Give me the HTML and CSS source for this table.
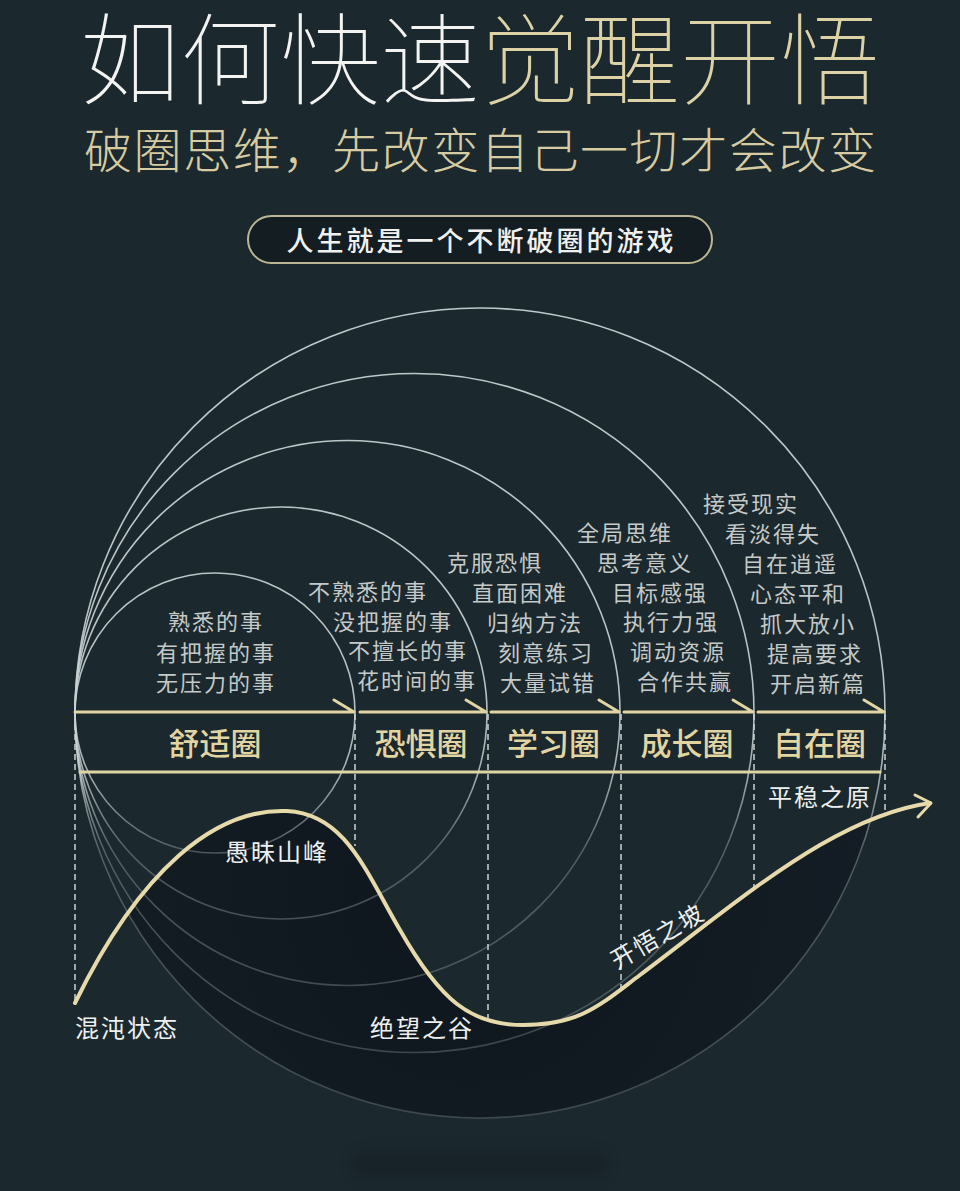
FILE: index.html
```html
<!DOCTYPE html>
<html lang="zh-CN">
<head>
<meta charset="utf-8">
<title>如何快速觉醒开悟</title>
<link rel="stylesheet" href="styles.css">
</head>
<body>
<main class="poster">
  <header class="head">
    <h1 class="title"><span class="t-white">如何快速</span><span class="t-gold">觉醒开悟</span></h1>
    <p class="sub">破圈思维，先改变自己一切才会改变</p>
    <div class="pill">人生就是一个不断破圈的游戏</div>
  </header>

  <section class="diagram">
    <svg class="art" width="960" height="911" viewBox="0 280 960 911" xmlns="http://www.w3.org/2000/svg">
      <defs>
        <linearGradient id="arcfade" gradientUnits="userSpaceOnUse" x1="0" y1="280" x2="0" y2="1120">
          <stop offset="0" stop-color="#c9d2d3" stop-opacity="0.95"/>
          <stop offset="0.5" stop-color="#c9d2d3" stop-opacity="0.9"/>
          <stop offset="0.59" stop-color="#c9d2d3" stop-opacity="0.78"/>
          <stop offset="0.68" stop-color="#aab6b8" stop-opacity="0.38"/>
          <stop offset="1" stop-color="#aab6b8" stop-opacity="0.26"/>
        </linearGradient>
        <radialGradient id="valleyfill" gradientUnits="userSpaceOnUse" cx="470" cy="900" r="420">
          <stop offset="0" stop-color="#0f161d"/>
          <stop offset="1" stop-color="#141d25"/>
        </radialGradient>
        <clipPath id="outer">
          <circle cx="480" cy="713" r="405"/>
        </clipPath>
      </defs>

      <path class="valley" clip-path="url(#outer)"
        d="M75,1003 C140,870 215,808 287,811 C345,814 365,870 400,930 C440,1000 470,1025 523,1025 C580,1025 600,1005 640,975 C700,930 760,880 820,845 C860,822 895,808 930,803 L960,803 L960,1191 L0,1191 L0,1003 Z"/>

      <g class="rings">
        <circle cx="215" cy="713" r="140"/>
        <circle cx="281" cy="713" r="206"/>
        <circle cx="347.5" cy="713" r="272.5"/>
        <circle cx="414.5" cy="713" r="339.5"/>
        <circle cx="480" cy="713" r="405"/>
      </g>

      <g class="dashes">
        <path d="M75,714 V1003"/>
        <path d="M355,714 V846"/>
        <path d="M488,714 V1018"/>
        <path d="M621,714 V989"/>
        <path d="M754,714 V891"/>
        <path d="M885,714 V812"/>
      </g>

      <g class="band-lines">
        <path d="M75,712 H354 M334,700 L354,712"/>
        <path d="M360,712 H486 M466,700 L486,712"/>
        <path d="M491,712 H619 M599,700 L619,712"/>
        <path d="M624,712 H753 M733,700 L753,712"/>
        <path d="M758,712 H884 M864,700 L884,712"/>
        <path d="M80,772 H880"/>
      </g>

      <path class="curve" d="M75,1003 C140,870 215,808 287,811 C345,814 365,870 400,930 C440,1000 470,1025 523,1025 C580,1025 600,1005 640,975 C700,930 760,880 820,845 C860,822 895,808 930,803"/>
      <path class="curve-head" d="M915,795 L931,803 L918,817"/>
    </svg>

    <div class="group g1">
      <div class="ln">熟悉的事</div>
      <div class="ln">有把握的事</div>
      <div class="ln">无压力的事</div>
    </div>
    <div class="group g2">
      <div class="ln">不熟悉的事</div>
      <div class="ln">没把握的事</div>
      <div class="ln">不擅长的事</div>
      <div class="ln">花时间的事</div>
    </div>
    <div class="group g3">
      <div class="ln">克服恐惧</div>
      <div class="ln">直面困难</div>
      <div class="ln">归纳方法</div>
      <div class="ln">刻意练习</div>
      <div class="ln">大量试错</div>
    </div>
    <div class="group g4">
      <div class="ln">全局思维</div>
      <div class="ln">思考意义</div>
      <div class="ln">目标感强</div>
      <div class="ln">执行力强</div>
      <div class="ln">调动资源</div>
      <div class="ln">合作共赢</div>
    </div>
    <div class="group g5">
      <div class="ln">接受现实</div>
      <div class="ln">看淡得失</div>
      <div class="ln">自在逍遥</div>
      <div class="ln">心态平和</div>
      <div class="ln">抓大放小</div>
      <div class="ln">提高要求</div>
      <div class="ln">开启新篇</div>
    </div>

    <div class="band">
      <div class="zone z1">舒适圈</div>
      <div class="zone z2">恐惧圈</div>
      <div class="zone z3">学习圈</div>
      <div class="zone z4">成长圈</div>
      <div class="zone z5">自在圈</div>
    </div>

    <div class="tag tag-plain">平稳之原</div>
    <div class="tag tag-peak">愚昧山峰</div>
    <div class="tag tag-chaos">混沌状态</div>
    <div class="tag tag-valley">绝望之谷</div>
    <div class="tag tag-slope">开悟之坡</div>

    <div class="smudge" aria-hidden="true"></div>
  </section>
</main>
</body>
</html>
```

FILE: styles.css
```css
* {
  box-sizing: border-box;
  margin: 0;
  padding: 0;
}

html,
body {
  background: #1b282d;
}

body {
  width: 960px;
  height: 1191px;
  overflow: hidden;
  font-family: "Noto Sans CJK SC", "Noto Sans", sans-serif;
  color: #eceeee;
}

.poster {
  width: 960px;
  height: 1191px;
  display: flex;
  flex-direction: column;
}

/* ---------- header ---------- */
.head {
  height: 280px;
  display: flex;
  flex-direction: column;
  align-items: center;
  padding-top: 12px;
}

.title {
  height: 100px;
  font-family: "Liberation Sans", "Noto Sans CJK SC", sans-serif;
  font-size: 100px;
  line-height: 100px;
  font-weight: 100;
  letter-spacing: 0;
  white-space: nowrap;
}

.t-white {
  color: #f3f3f1;
}

.t-gold {
  color: #ddd2a6;
}

.sub {
  margin-top: 11px;
  height: 48px;
  font-size: 48px;
  line-height: 48px;
  font-weight: 300;
  letter-spacing: 1.6px;
  padding-left: 1.6px;
  color: #d6cba1;
  white-space: nowrap;
}

.pill {
  margin-top: 44px;
  width: 466px;
  height: 49px;
  border: 2px solid #bdb694;
  border-radius: 25px;
  background: #141d22;
  display: flex;
  align-items: center;
  justify-content: center;
  font-size: 27px;
  line-height: 40px;
  font-weight: 500;
  letter-spacing: 3px;
  padding-left: 3px;
  color: #f0f0ee;
  white-space: nowrap;
}

/* ---------- diagram ---------- */
.diagram {
  position: relative;
  height: 911px;
}

.art {
  display: block;
}

.valley {
  fill: url(#valleyfill);
}

.rings circle {
  fill: none;
  stroke: url(#arcfade);
  stroke-width: 1.6;
}

.dashes path {
  fill: none;
  stroke: #cdd2d2;
  stroke-width: 1.5;
  stroke-dasharray: 6 4;
}

.band-lines path {
  fill: none;
  stroke: #e2d5a4;
  stroke-width: 3;
  stroke-linecap: round;
  stroke-linejoin: round;
}

.curve {
  fill: none;
  stroke: #e6d9aa;
  stroke-width: 4;
  stroke-linecap: round;
}

.curve-head {
  fill: none;
  stroke: #e6d9aa;
  stroke-width: 3;
  stroke-linecap: round;
  stroke-linejoin: round;
}

/* text groups inside circles */
.group {
  position: absolute;
  font-size: 22px;
  letter-spacing: 2px;
  color: #c5c9c8;
  white-space: nowrap;
}

.g1 {
  left: 115px;
  top: 325px;
  width: 200px;
  line-height: 30.5px;
  text-align: center;
  padding-left: 2px;
}

.g2 {
  left: 308px;
  top: 296px;
  line-height: 29.5px;
}
.g2 .ln:nth-child(2) { margin-left: 25px; }
.g2 .ln:nth-child(3) { margin-left: 40px; }
.g2 .ln:nth-child(4) { margin-left: 49px; }

.g3 {
  left: 447px;
  top: 266px;
  line-height: 30px;
}
.g3 .ln:nth-child(2) { margin-left: 25px; }
.g3 .ln:nth-child(3) { margin-left: 40px; }
.g3 .ln:nth-child(4) { margin-left: 51px; }
.g3 .ln:nth-child(5) { margin-left: 53px; }

.g4 {
  left: 577px;
  top: 237px;
  line-height: 29.8px;
}
.g4 .ln:nth-child(2) { margin-left: 20px; }
.g4 .ln:nth-child(3) { margin-left: 35px; }
.g4 .ln:nth-child(4) { margin-left: 46px; }
.g4 .ln:nth-child(5) { margin-left: 53px; }
.g4 .ln:nth-child(6) { margin-left: 60px; }

.g5 {
  left: 703px;
  top: 207px;
  line-height: 30px;
}
.g5 .ln:nth-child(2) { margin-left: 22px; }
.g5 .ln:nth-child(3) { margin-left: 39px; }
.g5 .ln:nth-child(4) { margin-left: 47px; }
.g5 .ln:nth-child(5) { margin-left: 57px; }
.g5 .ln:nth-child(6) { margin-left: 64px; }
.g5 .ln:nth-child(7) { margin-left: 67px; }

/* band labels */
.band {
  position: absolute;
  left: 75px;
  top: 432px;
  height: 60px;
  display: flex;
  align-items: center;
}

.zone {
  text-align: center;
  font-size: 31px;
  line-height: 60px;
  font-weight: 500;
  color: #e2d5a2;
  white-space: nowrap;
}

.z1 { width: 280px; }
.z2 { width: 132px; }
.z3 { width: 133px; }
.z4 { width: 134px; }
.z5 { width: 131px; }

/* curve labels */
.tag {
  position: absolute;
  font-size: 24px;
  line-height: 30px;
  letter-spacing: 2px;
  color: #eef0ef;
  white-space: nowrap;
}

.tag-plain { left: 768px; top: 501px; }
.tag-peak { left: 225px; top: 556px; }
.tag-chaos { left: 75px; top: 732px; }
.tag-valley { left: 370px; top: 732px; }

.tag-slope {
  left: 604px;
  top: 640px;
  width: 106px;
  text-align: center;
  transform: rotate(-30deg);
}

/* faint blurred watermark at the bottom */
.smudge {
  position: absolute;
  left: 352px;
  top: 872px;
  width: 256px;
  height: 26px;
  border-radius: 6px;
  background: #141f25;
  filter: blur(6px);
  opacity: 0.55;
}
```
